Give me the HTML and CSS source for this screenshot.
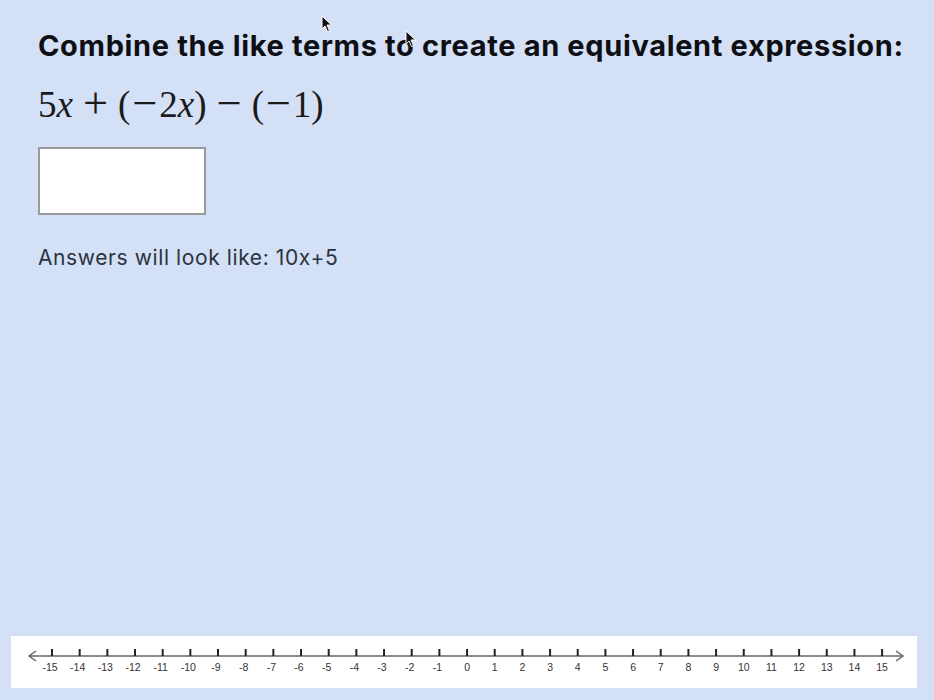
FILE: index.html
```html
<!DOCTYPE html>
<html lang="en">
<head>
  <meta charset="UTF-8" />
  <meta name="viewport" content="width=device-width, initial-scale=1.0">
  <title>Combine like terms</title>
  <link rel="stylesheet" href="styles.css">
</head>
<body>
  <div class="question">
    <h1 class="title">Combine the like terms to create an equivalent expression:</h1>
    <p class="expression">
      <span>5</span><i>x</i><span class="op bin">+</span><span>(</span><span class="op">−</span><span>2</span><i>x</i><span>)</span><span class="op bin">−</span><span>(</span><span class="op">−</span><span>1</span><span>)</span>
    </p>
    <input type="text" class="answer" aria-label="Answer">
    <p class="hint">Answers will look like: 10x+5</p>
  </div>

  <div class="numberline">
    <svg id="numberline" width="906" height="52" viewBox="0 0 906 52"></svg>
  </div>

  <!-- mouse pointers that were on the screen -->
  <svg class="pointer pointer-a" width="12" height="18" viewBox="0 0 12 18">
    <path d="M1 1 L1 14 L4 11 L6.5 16.5 L8.5 15.5 L6 10 L10.5 10 Z" fill="#111" stroke="#fff" stroke-width="1"/>
  </svg>
  <svg class="pointer pointer-b" width="12" height="18" viewBox="0 0 12 18">
    <path d="M1 1 L1 14 L4 11 L6.5 16.5 L8.5 15.5 L6 10 L10.5 10 Z" fill="#111" stroke="#fff" stroke-width="1"/>
  </svg>

  <script>
    const svg = document.getElementById('numberline');
    const ns = 'http://www.w3.org/2000/svg';
    const startX = 41;
    const step = 27.67;
    const lineY = 20;

    function el(name, attrs) {
      const node = document.createElementNS(ns, name);
      for (const k in attrs) node.setAttribute(k, attrs[k]);
      svg.appendChild(node);
      return node;
    }

    // main line and the two arrow heads
    el('line', { x1: 18, y1: lineY, x2: 892, y2: lineY, stroke: '#666', 'stroke-width': 1.5 });
    el('polyline', { points: '25,15 18,20 25,25', fill: 'none', stroke: '#666', 'stroke-width': 1.5 });
    el('polyline', { points: '885,15 892,20 885,25', fill: 'none', stroke: '#666', 'stroke-width': 1.5 });

    for (let n = -15; n <= 15; n++) {
      const x = startX + (n + 15) * step;
      el('line', { x1: x, y1: 13, x2: x, y2: lineY, stroke: '#222', 'stroke-width': 2 });
      const label = el('text', { x: n < 0 ? x - 2 : x, y: 35, 'text-anchor': 'middle', class: 'tick-label' });
      label.textContent = n;
    }
  </script>
</body>
</html>
```

FILE: styles.css
```css
* {
  margin: 0;
  padding: 0;
  box-sizing: border-box;
}

body {
  font-family: Inter, 'Liberation Sans', Arial, sans-serif;
  background-color: #d4e0f5;
  color: #111;
  height: 100vh;
  display: flex;
  flex-direction: column;
  overflow: hidden;
}

.question {
  padding: 28px 38px 0;
  display: flex;
  flex-direction: column;
  align-items: flex-start;
}

.title {
  font-size: 29px;
  font-weight: 700;
  letter-spacing: 0.65px;
  line-height: 36px;
  color: #0d0f14;
  white-space: nowrap;
}

.expression {
  font-family: 'Liberation Serif', 'Times New Roman', serif;
  font-size: 37px;
  line-height: 44px;
  height: 44px;
  margin-top: 16px;
  color: #1a1a1a;
  display: flex;
  align-items: baseline;
}

.expression i {
  font-style: italic;
}

/* operators are wider in TeX than in Times */
.op {
  display: inline-block;
  font-size: 1.2em;
  line-height: 1;
  width: 0.648em;
  text-align: center;
  position: relative;
  top: 1px;
}

.bin {
  margin: 0 0.185em;
}

.answer {
  width: 168px;
  height: 68px;
  margin-top: 23px;
  background: #fff;
  border: 2px solid #9a9a9c;
  border-radius: 0;
  outline: none;
}

.hint {
  font-size: 21px;
  letter-spacing: 0.6px;
  line-height: 26px;
  margin-top: 30px;
  color: #2b3340;
}

.numberline {
  margin: auto 17px 12px 11px;
  height: 52px;
  background: #fff;
}

.numberline svg {
  display: block;
}

.tick-label {
  font-family: 'Liberation Sans', Arial, sans-serif;
  font-size: 10.5px;
  fill: #333;
}

.pointer {
  position: absolute;
}

.pointer-a {
  left: 321px;
  top: 15px;
}

.pointer-b {
  left: 405px;
  top: 30px;
}
```
